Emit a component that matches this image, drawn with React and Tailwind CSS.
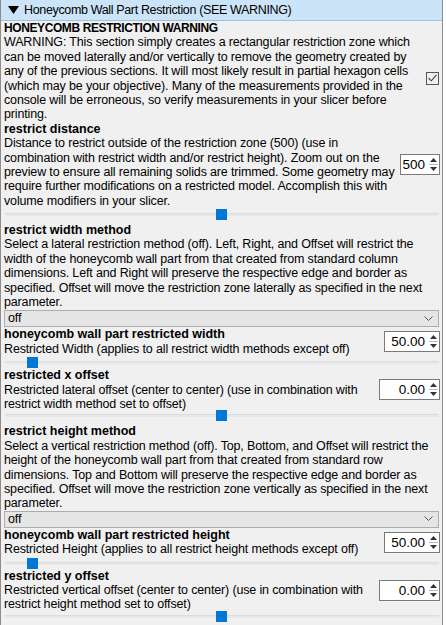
import { useState } from "react";

const font = { fontFamily: '"Liberation Sans", Arial, sans-serif' };

function Lines({ lines }) {
  return (
    <div className="tracking-[-0.15px]">
      {lines.map((l, i) => (
        <div key={i} className="whitespace-nowrap h-[14.4px] leading-[14.4px]">
          {l}
        </div>
      ))}
    </div>
  );
}

function Title({ children, caps }) {
  return (
    <div
      className={`whitespace-nowrap font-bold h-[14.4px] leading-[14.4px] ${
        caps ? "text-[12px] tracking-[-0.4px]" : "text-[12.5px]"
      }`}
    >
      {children}
    </div>
  );
}

function SpinBox({ value, width }) {
  return (
    <div className={`flex h-[21px] bg-white border border-[#7a7a7a] ${width}`}>
      <div className="flex-1 text-right pr-[3px] leading-[19px] text-[13.5px]">{value}</div>
      <div className="w-[10px] flex flex-col items-center justify-center gap-[2px] mr-[1px]">
        <svg width="7" height="4" viewBox="0 0 7 4">
          <path d="M0 4 L3.5 0 L7 4 Z" fill="#333" />
        </svg>
        <div className="w-[9px] h-px bg-[#bbb]" />
        <svg width="7" height="4" viewBox="0 0 7 4">
          <path d="M0 0 L3.5 4 L7 0 Z" fill="#333" />
        </svg>
      </div>
    </div>
  );
}

function Slider({ pos, h = "h-[13px]" }) {
  return (
    <div className={`relative mx-[1px] ${h}`}>
      <div className="absolute left-0 right-0 top-[5px] h-[3px] bg-[#e7e7e7] border-t border-[#dcdcdc]" />
      <div
        className="absolute top-[1px] w-[11px] h-[11px] bg-[#0078d7]"
        style={{ left: pos }}
      />
    </div>
  );
}

function Combo({ value }) {
  return (
    <div className="flex items-center h-[17px] bg-[#e5e5e5] border border-[#adadad] pl-[3px] pr-[5px] mr-[1px]">
      <div className="flex-1 leading-[15px] tracking-[-0.15px]">{value}</div>
      <svg width="9" height="6" viewBox="0 0 9 6">
        <path d="M0.5 0.5 L4.5 4.5 L8.5 0.5" stroke="#555" fill="none" />
      </svg>
    </div>
  );
}

function Param({ title, desc, control }) {
  return (
    <div className="flex items-center">
      <div className="flex-1 min-w-0">
        <Title>{title}</Title>
        <Lines lines={desc} />
      </div>
      {control && <div className="shrink-0">{control}</div>}
    </div>
  );
}

export default function App() {
  const [checked] = useState(true);
  return (
    <div className="w-[446px] h-[625px] bg-white overflow-hidden text-[12.5px] text-black" style={font}>
      <div className="w-[443px] h-full border-l border-r border-[#8c8c8c] bg-[#f0f0f0]">
        <div className="flex items-center h-[21px] bg-[#cce4f7] border-b border-[#99c2e6] pl-[7px]">
          <svg width="11" height="8" viewBox="0 0 11 8" className="mr-[5px]">
            <path d="M0 0 L11 0 L5.5 8 Z" fill="#000" />
          </svg>
          <span className="text-[12.5px] tracking-[-0.35px] whitespace-nowrap">
            Honeycomb Wall Part Restriction (SEE WARNING)
          </span>
        </div>

        <div className="pl-[3px] pr-[2px]">
          <div className="flex items-end">
            <div className="flex-1 min-w-0">
              <Title caps>HONEYCOMB RESTRICTION WARNING</Title>
              <Lines
                lines={[
                  "WARNING: This section simply creates a rectangular restriction zone which",
                  "can be moved laterally and/or vertically to remove the geometry created by",
                  "any of the previous sections. It will most likely result in partial hexagon cells",
                  "(which may be your objective). Many of the measurements provided in the",
                  "console will be erroneous, so verify measurements in your slicer before",
                  "printing.",
                ]}
              />
            </div>
            <div className="shrink-0 mb-[37px] mr-[1px]">
              <div className="w-[13px] h-[13px] border border-[#555] bg-[#f0f0f0] flex items-center justify-center">
                {checked && (
                  <svg width="9" height="8" viewBox="0 0 9 8">
                    <path d="M0.5 4 L3.3 6.8 L8.5 0.8" stroke="#444" strokeWidth="1.1" fill="none" />
                  </svg>
                )}
              </div>
            </div>
          </div>

          <Param
            title="restrict distance"
            desc={[
              "Distance to restrict outside of the restriction zone (500) (use in",
              "combination with restrict width and/or restrict height). Zoom out on the",
              "preview to ensure all remaining solids are trimmed. Some geometry may",
              "require further modifications on a restricted model. Accomplish this with",
              "volume modifiers in your slicer.",
            ]}
            control={<SpinBox value="500" width="w-[40px]" />}
          />
          <Slider pos="211px" h="h-[15px]" />

          <Param
            title="restrict width method"
            desc={[
              "Select a lateral restriction method (off). Left, Right, and Offset will restrict the",
              "width of the honeycomb wall part from that created from standard column",
              "dimensions. Left and Right will preserve the respective edge and border as",
              "specified. Offset will move the restriction zone laterally as specified in the next",
              "parameter.",
            ]}
          />
          <div className="h-[1px]" />
          <Combo value="off" />

          <Param
            title="honeycomb wall part restricted width"
            desc={["Restricted Width (applies to all restrict width methods except off)"]}
            control={<SpinBox value="50.00" width="w-[56px]" />}
          />
          <Slider pos="22px" h="h-[12px]" />

          <Param
            title="restricted x offset"
            desc={[
              "Restricted lateral offset (center to center)  (use in combination with",
              "restrict width method set to offset)",
            ]}
            control={<SpinBox value="0.00" width="w-[61px]" />}
          />
          <div className="-mt-[2px]">
            <Slider pos="211px" h="h-[15px]" />
          </div>

          <Param
            title="restrict height method"
            desc={[
              "Select a vertical restriction method (off). Top, Bottom, and Offset will restrict the",
              "height of the honeycomb wall part from that created from standard row",
              "dimensions. Top and Bottom will preserve the respective edge and border as",
              "specified. Offset will move the restriction zone vertically as specified in the next",
              "parameter.",
            ]}
          />
          <Combo value="off" />

          <Param
            title="honeycomb wall part restricted height"
            desc={["Restricted Height (applies to all restrict height methods except off)"]}
            control={<SpinBox value="50.00" width="w-[56px]" />}
          />
          <Slider pos="22px" h="h-[12px]" />

          <Param
            title="restricted y offset"
            desc={[
              "Restricted vertical offset (center to center) (use in combination with",
              "restrict height method set to offset)",
            ]}
            control={<SpinBox value="0.00" width="w-[61px]" />}
          />
          <div className="-mt-[2px]">
            <Slider pos="211px" />
          </div>
        </div>
      </div>
    </div>
  );
}
